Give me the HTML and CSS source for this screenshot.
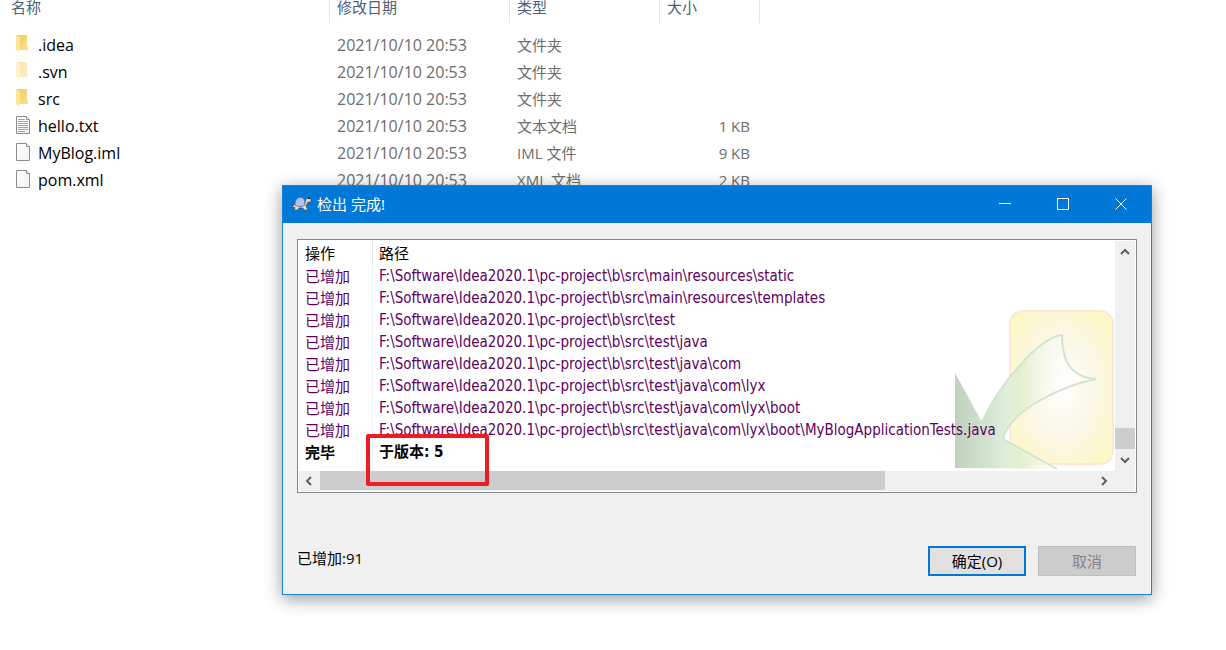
FILE: index.html
```
<!DOCTYPE html>
<html lang="zh-CN">
<head>
    <meta charset="UTF-8">
    <title>检出 完成!</title>
    <link rel="stylesheet" href="styles.css">
</head>
<body>
    <!-- shared icons -->
    <svg class="defs" aria-hidden="true">
        <defs>
            <linearGradient id="folder-front" x1="0" x2="1" y1="0" y2="1">
                <stop offset="0" stop-color="#f0ca66"/>
                <stop offset="1" stop-color="#fbe08c"/>
            </linearGradient>
            <linearGradient id="paper" x1="0" x2="1" y1="0" y2="1">
                <stop offset="0" stop-color="#fff"/>
                <stop offset="1" stop-color="#f0f3f4"/>
            </linearGradient>
            <symbol id="folder" viewBox="0 0 16 20">
                <path d="M1 1h10v11l1 1v3H4z" fill="url(#folder-front)"/>
                <path d="M0 1h1l3 3v11l-1 3-3-2z" fill="#ffe694"/>
            </symbol>
            <symbol id="file" viewBox="0 0 16 20">
                <path d="M.5 1.5h10l3 3v14H.5z" fill="url(#paper)" stroke="#8a8c8e"/>
                <path d="M10.5 1.5v3h3" fill="#fff" stroke="#8a8c8e"/>
            </symbol>
            <symbol id="text-file" viewBox="0 0 16 20">
                <use href="#file"/>
                <path d="M2 4.5h7M2 6.5h10M2 8.5h10M2 10.5h10M2 12.5h10M2 14.5h10M2 16.5h7" stroke="#a2a4a6"/>
            </symbol>
        </defs>
    </svg>

    <table class="files">
        <thead>
            <tr><th class="name">名称</th><th class="date">修改日期</th><th class="type">类型</th><th class="size">大小</th><th></th></tr>
        </thead>
        <tbody>
            <tr><td class="name"><div class="file"><svg class="icon"><use href="#folder"/></svg>.idea</div></td><td class="date">2021/10/10 20:53</td><td>文件夹</td><td class="size"></td><td></td></tr>
            <tr class="hidden-item"><td class="name"><div class="file"><svg class="icon"><use href="#folder"/></svg>.svn</div></td><td class="date">2021/10/10 20:53</td><td>文件夹</td><td class="size"></td><td></td></tr>
            <tr><td class="name"><div class="file"><svg class="icon"><use href="#folder"/></svg>src</div></td><td class="date">2021/10/10 20:53</td><td>文件夹</td><td class="size"></td><td></td></tr>
            <tr><td class="name"><div class="file"><svg class="icon"><use href="#text-file"/></svg>hello.txt</div></td><td class="date">2021/10/10 20:53</td><td>文本文档</td><td class="size">1 KB</td><td></td></tr>
            <tr><td class="name"><div class="file"><svg class="icon"><use href="#file"/></svg>MyBlog.iml</div></td><td class="date">2021/10/10 20:53</td><td>IML 文件</td><td class="size">9 KB</td><td></td></tr>
            <tr><td class="name"><div class="file"><svg class="icon"><use href="#file"/></svg>pom.xml</div></td><td class="date">2021/10/10 20:53</td><td>XML 文档</td><td class="size">2 KB</td><td></td></tr>
        </tbody>
    </table>

    <div class="dialog" role="dialog" aria-labelledby="dialog-title">
        <div class="titlebar">
            <svg class="turtle" viewBox="0 0 20 16" aria-hidden="true">
                <path d="M3 8L0 11l3 .5L2 14h4l1-2h4l1 2h4l-2-4 2-4h3V3l-3-1-2 1-1 4-2 2z" fill="#dfe2dc" stroke="#49545c" stroke-width=".8"/>
                <path d="M3 9C3 4 5 1.5 8.5 1.5S13 4 13 9c-3 2-7 2-10 0z" fill="#b4c0f2" stroke="#66717f" stroke-width=".9"/>
                <path d="M16 1.5h2V3h-2z" fill="#222"/>
            </svg>
            <span id="dialog-title">检出 完成!</span>
            <div class="window-buttons">
                <button type="button" aria-label="最小化"><svg viewBox="0 0 12 12"><path d="M0 5.5h12"/></svg></button>
                <button type="button" aria-label="最大化"><svg viewBox="0 0 12 12"><path d="M.5.5h11v11H.5z"/></svg></button>
                <button type="button" aria-label="关闭"><svg viewBox="0 0 12 12"><path d="M.5.5l11 11M11.5.5l-11 11"/></svg></button>
            </div>
        </div>

        <div class="content">
            <div class="list">
                <div class="view">
                    <svg class="watermark" viewBox="0 0 160 162" aria-hidden="true">
                        <defs>
                            <radialGradient id="card" cx=".5" cy=".5" r=".6">
                                <stop offset="0" stop-color="#fff"/>
                                <stop offset=".55" stop-color="#faf7e6"/>
                                <stop offset="1" stop-color="#fcf8c8"/>
                            </radialGradient>
                            <linearGradient id="arrow" gradientUnits="userSpaceOnUse" x1="0" x2="108" y1="0" y2="0">
                                <stop offset="0" stop-color="#bfd1bd"/>
                                <stop offset=".48" stop-color="#dfeeda"/>
                                <stop offset=".6" stop-color="#e2f0cc"/>
                                <stop offset="1" stop-color="#fff" stop-opacity=".3"/>
                            </linearGradient>
                        </defs>
                        <rect x="55" y="2" width="103" height="153" rx="13" fill="url(#card)" stroke="#fce8d4" stroke-width="2"/>
                        <path d="M0 64l27 49C43 77 83 29 107 26c0 24 7 42 34 44-34 7-86 31-93 60l54 30-102-1z" fill="url(#arrow)"/>
                        <path d="M27 113C43 77 83 29 107 26c0 24 7 42 34 44-34 7-86 31-93 60l54 30" fill="none" stroke="#d3e4d0" stroke-width="2"/>
                    </svg>
                    <table class="log">
                        <thead>
                            <tr><th>操作</th><th>路径</th></tr>
                        </thead>
                        <tbody>
                            <tr><td>已增加</td><td class="path">F:\Software\Idea2020.1\pc-project\b\src\main\resources\static</td></tr>
                            <tr><td>已增加</td><td class="path">F:\Software\Idea2020.1\pc-project\b\src\main\resources\templates</td></tr>
                            <tr><td>已增加</td><td class="path">F:\Software\Idea2020.1\pc-project\b\src\test</td></tr>
                            <tr><td>已增加</td><td class="path">F:\Software\Idea2020.1\pc-project\b\src\test\java</td></tr>
                            <tr><td>已增加</td><td class="path">F:\Software\Idea2020.1\pc-project\b\src\test\java\com</td></tr>
                            <tr><td>已增加</td><td class="path">F:\Software\Idea2020.1\pc-project\b\src\test\java\com\lyx</td></tr>
                            <tr><td>已增加</td><td class="path">F:\Software\Idea2020.1\pc-project\b\src\test\java\com\lyx\boot</td></tr>
                            <tr><td>已增加</td><td class="path">F:\Software\Idea2020.1\pc-project\b\src\test\java\com\lyx\boot\MyBlogApplicationTests.java</td></tr>
                            <tr class="done"><td>完毕</td><td class="path">于版本: 5</td></tr>
                        </tbody>
                    </table>
                </div>
                <div class="scroll-y">
                    <svg class="arrow" viewBox="0 0 12 12"><path d="M2 8l4-4 4 4"/></svg>
                    <div class="thumb"></div>
                    <svg class="arrow" viewBox="0 0 12 12"><path d="M2 4l4 4 4-4"/></svg>
                </div>
                <div class="scroll-x">
                    <svg class="arrow" viewBox="0 0 12 12"><path d="M8 2L4 6l4 4"/></svg>
                    <div class="track"><div class="thumb"></div></div>
                    <svg class="arrow" viewBox="0 0 12 12"><path d="M4 2l4 4-4 4"/></svg>
                </div>
                <div class="corner"></div>
                <div class="highlight"></div>
            </div>

            <div class="footer">
                <span class="summary">已增加:91</span>
                <button type="button" class="btn primary">确定(O)</button>
                <button type="button" class="btn" disabled>取消</button>
            </div>
        </div>
    </div>
</body>
</html>
```
FILE: styles.css
```
body {
    margin: 0;
    min-height: 100vh;
    position: relative;
    overflow: hidden;
    background-color: #fff;
    color: #000;
    font-family: "Open Sans", "Noto Sans CJK SC", sans-serif;
    font-size: 15px;
}
button {
    font: inherit;
    padding: 0;
}
.defs {
    position: absolute;
    width: 0;
    height: 0;
}

/* File list */
.files {
    width: 100%;
    table-layout: fixed;
    border-collapse: separate;
    border-spacing: 0;
    color: #6d6d6d;
}
.files th {
    height: 23px;
    padding: 0 0 0 7px;
    border-right: 1px solid #e5e5e5;
    box-sizing: border-box;
    line-height: 14px;
    vertical-align: top;
    text-align: left;
    font-weight: normal;
    color: #4c607a;
}
.files th:last-child {
    border: none;
}
.files th.name {
    width: 330px;
    padding-left: 11px;
}
.files th.date {
    width: 180px;
}
.files th.type {
    width: 150px;
}
.files th.size {
    width: 100px;
}
.files tbody::before {
    content: "";
    display: block;
    height: 9px;
}
.files td {
    height: 27px;
    padding: 0 0 0 7px;
    line-height: 27px;
}
.files td.name {
    padding-left: 16px;
    font-size: 16px;
    color: #000;
}
.files td.date {
    font-size: 16px;
}
.files td.size {
    padding-right: 10px;
    text-align: right;
}
.file {
    display: flex;
    align-items: flex-start;
    gap: 6px;
    height: 27px;
}
.icon {
    width: 16px;
    height: 20px;
    margin-top: 2px;
}
.hidden-item .icon {
    opacity: 0.5;
}

/* Dialog window */
.dialog {
    position: absolute;
    top: 185px;
    left: 282px;
    right: 74px;
    border: 1px solid #1883d7;
    background-color: #f0f0f0;
    box-shadow: 0 4px 16px rgba(0, 0, 0, 0.4);
}
.titlebar {
    display: flex;
    align-items: center;
    height: 35px;
    padding: 0 1px 2px 9px;
    background-color: #0078d7;
    color: #fff;
}
.turtle {
    width: 20px;
    height: 16px;
    margin-right: 5px;
}
.window-buttons {
    display: flex;
    align-self: stretch;
    margin-left: auto;
}
.window-buttons button {
    display: flex;
    align-items: center;
    justify-content: center;
    width: 58px;
    border: none;
    background: none;
}
.window-buttons svg {
    width: 12px;
    height: 12px;
    fill: none;
    stroke: #fff;
}
.content {
    padding: 16px 14px 18px;
}

/* Log list */
.list {
    position: relative;
    display: grid;
    grid-template-columns: 1fr 20px;
    grid-template-rows: 230px 20px;
    padding: 1px;
    border: 1px solid #828790;
    background-color: #fff;
}
.view {
    position: relative;
    overflow: hidden;
}
.watermark {
    position: absolute;
    right: 0;
    bottom: 0;
    width: 160px;
    height: 162px;
}
.log {
    position: relative;
    width: 100%;
    table-layout: fixed;
    border-collapse: separate;
    border-spacing: 0;
    white-space: nowrap;
    color: #600060;
}
.log th,
.log td {
    height: 22px;
    padding: 0 0 0 6px;
    line-height: 22px;
    text-align: left;
}
.log th {
    height: 24px;
    font-weight: normal;
    color: #000;
}
.log th:first-child {
    width: 67px;
    border-right: 1px solid #e5e5e5;
}
.log td:first-child {
    border-right: 1px solid #f0f4ff;
}
.log .path {
    font-family: "DejaVu Sans Condensed", "Noto Sans CJK SC", sans-serif;
}
.log .done {
    color: #000;
    font-weight: bold;
}
.scroll-y,
.scroll-x {
    display: flex;
    align-items: center;
    background-color: #f0f0f0;
}
.scroll-y {
    flex-direction: column;
}
.scroll-y .thumb {
    width: 100%;
    height: 21px;
    margin-top: auto;
}
.corner {
    background-color: #f0f0f0;
}
.thumb {
    background-color: #cdcdcd;
}
.track {
    flex: 1;
    align-self: stretch;
}
.track .thumb {
    width: 73%;
    height: 19px;
}
.arrow {
    flex: none;
    width: 12px;
    height: 12px;
    margin: 5px;
    fill: none;
    stroke: #606060;
    stroke-width: 2;
}
.scroll-x .arrow {
    margin: 4px 5px 4px 4px;
}
.highlight {
    position: absolute;
    top: 194px;
    left: 68px;
    width: 115px;
    height: 44px;
    border: 4px solid #ed1c24;
    border-radius: 2px;
}

/* Footer */
.footer {
    display: flex;
    align-items: flex-start;
    gap: 12px;
    margin-top: 53px;
    padding-right: 1px;
}
.summary {
    margin-right: auto;
    line-height: 24px;
}
.btn {
    width: 98px;
    height: 30px;
    padding-bottom: 2px;
    border: 1px solid #bfbfbf;
    background-color: #ccc;
    color: #838383;
}
.btn.primary {
    border: 2px solid #0078d7;
    background-color: #e1e1e1;
    color: #000;
}
```
